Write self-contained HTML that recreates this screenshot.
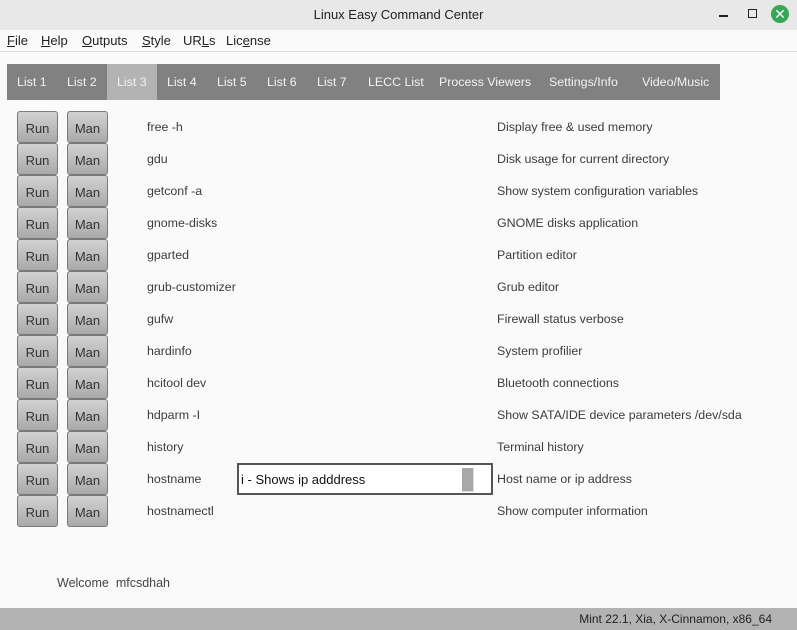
<!DOCTYPE html>
<html><head><meta charset="utf-8"><style>
*{margin:0;padding:0;box-sizing:border-box}
body{width:797px;height:630px;background:#fafafa;font-family:"Liberation Sans","DejaVu Sans",sans-serif;font-size:12.4px;color:#3c3c3c;position:relative;overflow:hidden}
.a{position:absolute;white-space:nowrap}
#title{left:0;top:0;width:797px;height:30px;background:#e8e8e8}
#menu{top:30px;left:0;width:797px;height:22px;border-bottom:1px solid #dcdcdc}
#tabs{left:7px;top:64px;width:713px;height:36px;background:#818181}
.t{top:75px;color:#f2f2f2}
.b{width:41px;height:32px;border:1px solid #7a7a7a;border-radius:3px;background:linear-gradient(#d2d2d2,#a9a9a9);color:#333;text-align:center;line-height:33px;font-size:13px}
u{text-decoration:underline}
</style></head><body>
<div class="a" id="title"></div>
<div class="a" style="left:0;width:797px;top:7px;text-align:center;color:#222;font-size:13px">Linux Easy Command Center</div>
<div class="a" style="left:719px;top:15px;width:9px;height:1.5px;background:#222"></div>
<div class="a" style="left:748px;top:9px;width:9px;height:9px;border:1.5px solid #222"></div>
<div class="a" style="left:771px;top:5px;width:18px;height:18px;border-radius:50%;background:#35a854;color:#fff;text-align:center;line-height:18px;font-weight:bold;font-size:14px">✕</div>
<div class="a" id="menu"></div>
<div class="a" style="left:7px;top:33px;color:#222;font-size:13px"><u>F</u>ile</div>
<div class="a" style="left:41px;top:33px;color:#222;font-size:13px"><u>H</u>elp</div>
<div class="a" style="left:82px;top:33px;color:#222;font-size:13px"><u>O</u>utputs</div>
<div class="a" style="left:142px;top:33px;color:#222;font-size:13px"><u>S</u>tyle</div>
<div class="a" style="left:183px;top:33px;color:#222;font-size:13px">UR<u>L</u>s</div>
<div class="a" style="left:226px;top:33px;color:#222;font-size:13px">Lic<u>e</u>nse</div>
<div class="a" id="tabs"></div>
<div class="a" style="left:107px;top:64px;width:50px;height:36px;background:#b3b3b3"></div>
<div class="a t" style="left:17px">List 1</div>
<div class="a t" style="left:67px">List 2</div>
<div class="a t" style="left:117px">List 3</div>
<div class="a t" style="left:167px">List 4</div>
<div class="a t" style="left:217px">List 5</div>
<div class="a t" style="left:267px">List 6</div>
<div class="a t" style="left:317px">List 7</div>
<div class="a t" style="left:368px">LECC List</div>
<div class="a t" style="left:439px">Process Viewers</div>
<div class="a t" style="left:549px">Settings/Info</div>
<div class="a t" style="left:642px">Video/Music</div>

<div class="a b" style="left:17px;top:111px">Run</div><div class="a b" style="left:67px;top:111px">Man</div><div class="a" style="left:147px;top:120px">free -h</div><div class="a" style="left:497px;top:120px">Display free &amp; used memory</div>
<div class="a b" style="left:17px;top:143px">Run</div><div class="a b" style="left:67px;top:143px">Man</div><div class="a" style="left:147px;top:152px">gdu</div><div class="a" style="left:497px;top:152px">Disk usage for current directory</div>
<div class="a b" style="left:17px;top:175px">Run</div><div class="a b" style="left:67px;top:175px">Man</div><div class="a" style="left:147px;top:184px">getconf -a</div><div class="a" style="left:497px;top:184px">Show system configuration variables</div>
<div class="a b" style="left:17px;top:207px">Run</div><div class="a b" style="left:67px;top:207px">Man</div><div class="a" style="left:147px;top:216px">gnome-disks</div><div class="a" style="left:497px;top:216px">GNOME disks application</div>
<div class="a b" style="left:17px;top:239px">Run</div><div class="a b" style="left:67px;top:239px">Man</div><div class="a" style="left:147px;top:248px">gparted</div><div class="a" style="left:497px;top:248px">Partition editor</div>
<div class="a b" style="left:17px;top:271px">Run</div><div class="a b" style="left:67px;top:271px">Man</div><div class="a" style="left:147px;top:280px">grub-customizer</div><div class="a" style="left:497px;top:280px">Grub editor</div>
<div class="a b" style="left:17px;top:303px">Run</div><div class="a b" style="left:67px;top:303px">Man</div><div class="a" style="left:147px;top:312px">gufw</div><div class="a" style="left:497px;top:312px">Firewall status verbose</div>
<div class="a b" style="left:17px;top:335px">Run</div><div class="a b" style="left:67px;top:335px">Man</div><div class="a" style="left:147px;top:344px">hardinfo</div><div class="a" style="left:497px;top:344px">System profilier</div>
<div class="a b" style="left:17px;top:367px">Run</div><div class="a b" style="left:67px;top:367px">Man</div><div class="a" style="left:147px;top:376px">hcitool dev</div><div class="a" style="left:497px;top:376px">Bluetooth connections</div>
<div class="a b" style="left:17px;top:399px">Run</div><div class="a b" style="left:67px;top:399px">Man</div><div class="a" style="left:147px;top:408px">hdparm -I</div><div class="a" style="left:497px;top:408px">Show SATA/IDE device parameters /dev/sda</div>
<div class="a b" style="left:17px;top:431px">Run</div><div class="a b" style="left:67px;top:431px">Man</div><div class="a" style="left:147px;top:440px">history</div><div class="a" style="left:497px;top:440px">Terminal history</div>
<div class="a b" style="left:17px;top:463px">Run</div><div class="a b" style="left:67px;top:463px">Man</div><div class="a" style="left:147px;top:472px">hostname</div><div class="a" style="left:497px;top:472px">Host name or ip address</div>
<div class="a b" style="left:17px;top:495px">Run</div><div class="a b" style="left:67px;top:495px">Man</div><div class="a" style="left:147px;top:504px">hostnamectl</div><div class="a" style="left:497px;top:504px">Show computer information</div>

<div class="a" style="left:237px;top:463px;width:256px;height:32px;border:2px solid #555;background:#fff"></div>
<div class="a" style="left:241px;top:472px;color:#111;font-size:13px">i - Shows ip adddress</div>
<div class="a" style="left:462px;top:468px;width:12px;height:24px;background:#a8a8a8;border-right:1px solid #ddd;border-bottom:1px solid #ddd"></div>

<div class="a" style="left:57px;top:576px;font-size:12.5px;color:#444">Welcome&nbsp; mfcsdhah</div>
<div class="a" style="left:0;top:608px;width:797px;height:22px;background:#b3b3b3"></div>
<div class="a" style="right:25px;top:612px;color:#222;font-size:12px">Mint 22.1, Xia, X-Cinnamon, x86_64</div>
</body></html>
